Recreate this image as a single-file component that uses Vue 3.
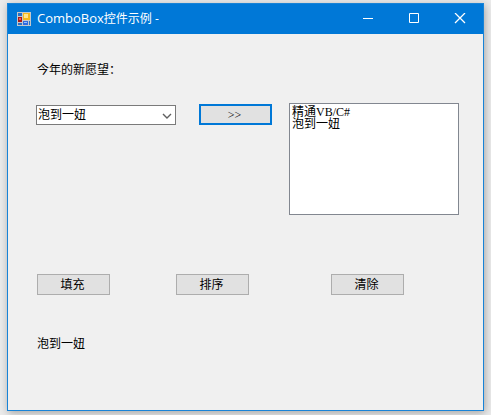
<template>
  <div class="desktop">
    <div class="window">
      <header class="title-bar">
        <svg class="app-icon" width="14" height="14" viewBox="0 0 14 14" shape-rendering="crispEdges">
          <rect width="14" height="14" fill="#c4c8cc" />
          <rect x="1" y="1" width="4" height="3" fill="#2a72c4" />
          <rect x="1" y="5" width="4" height="5" fill="#a81818" />
          <rect x="2" y="6" width="2" height="2" fill="#f06050" />
          <rect x="6" y="1" width="7" height="7" fill="#f4b81c" />
          <rect x="7" y="2" width="4" height="4" fill="#ffe48a" />
          <rect x="6" y="9" width="5" height="4" fill="#2f6ce0" />
          <rect x="7" y="10" width="3" height="1" fill="#9cc0ff" />
          <rect x="1" y="11" width="4" height="2" fill="#2a72c4" />
          <rect x="12" y="9" width="1" height="4" fill="#2a72c4" />
        </svg>
        <h1 class="title"><span class="latin">ComboBox</span>控件示例 -</h1>
        <div class="controls">
          <button type="button" aria-label="最小化">
            <svg width="12" height="12" viewBox="0 0 12 12"><path d="M1 5.5H11" /></svg>
          </button>
          <button type="button" aria-label="最大化">
            <svg width="12" height="12" viewBox="0 0 12 12"><path d="M1.5 0.5H10.5V9.5H1.5Z" /></svg>
          </button>
          <button type="button" aria-label="关闭">
            <svg width="12" height="12" viewBox="0 0 12 12"><path class="cross" d="M1 0L11 10M11 0L1 10" /></svg>
          </button>
        </div>
      </header>

      <main class="form">
        <label class="caption" for="wish">今年的新愿望：</label>
        <div class="row">
          <div class="combo">
            <select id="wish" v-model="wish">
              <option v-for="item in wishes" :key="item" :value="item">{{ item }}</option>
            </select>
            <svg class="arrow" width="10" height="6" viewBox="0 0 10 6"><path d="M1 1L5 5L9 1" /></svg>
          </div>
          <button type="button" class="btn default" @click="add">&gt;&gt;</button>
          <select v-model="picked" class="list" size="8" aria-label="愿望列表">
            <option v-for="item in list" :key="item" :value="item">{{ item }}</option>
          </select>
        </div>
        <div class="actions">
          <button type="button" class="btn" @click="fill">填充</button>
          <button type="button" class="btn" @click="sort">排序</button>
          <button type="button" class="btn" @click="clear">清除</button>
        </div>
        <p class="result">{{ wish }}</p>
      </main>
    </div>
  </div>
</template>

<script setup>
import { ref } from 'vue';

const wishes = ref(['泡到一妞', '精通VB/C#']);
const wish = ref('泡到一妞');
const list = ref(['精通VB/C#', '泡到一妞']);
const picked = ref(null);

const add = () => {
  if (wish.value && !list.value.includes(wish.value)) {
    list.value.push(wish.value);
  }
};

const fill = () => {
  list.value = [...wishes.value];
};

const sort = () => {
  list.value.sort((a, b) => a.localeCompare(b, 'zh'));
};

const clear = () => {
  list.value = [];
};
</script>

<style>
body {
  background: #ebebeb;
}
</style>

<style scoped>
.desktop {
  box-sizing: border-box;
  display: flex;
  min-height: 100vh;
  padding: 3px 7px 4px;
  font-family: "Liberation Serif", "Noto Sans CJK SC", serif;
  font-size: 12px;
  line-height: 14px;
  color: #000;
}
.window {
  flex: 1;
  display: flex;
  flex-direction: column;
  border: 1px solid #1883d7;
  background: #f0f0f0;
  box-shadow: 1px 2px 8px rgba(0, 0, 0, 0.3);
}
.title-bar {
  display: flex;
  align-items: center;
  height: 30px;
  padding-left: 9px;
  background: #0078d7;
  color: #fff;
}
.title {
  flex: 1;
  margin: 0 0 0 6px;
  padding-bottom: 2px;
  font-family: "Open Sans", "Noto Sans CJK SC", sans-serif;
  font-size: 12px;
  font-weight: normal;
}
.latin {
  font-size: 13px;
}
.controls {
  display: flex;
}
.controls button {
  display: flex;
  align-items: center;
  justify-content: center;
  width: 46px;
  height: 30px;
  padding: 0;
  border: none;
  background: none;
}
.controls path {
  fill: none;
  stroke: #fff;
}
.controls .cross {
  stroke-width: 1.3;
}
.form {
  padding: 29px 24px 24px 28px;
}
.caption {
  display: block;
  padding-left: 1px;
}
.row {
  display: flex;
  align-items: flex-start;
  margin-top: 26px;
}
.combo {
  position: relative;
  width: 140px;
  margin: 2px 23px 0 0;
}
.combo select {
  display: block;
  appearance: none;
  box-sizing: border-box;
  width: 100%;
  height: 20px;
  padding: 0 20px 1px 1px;
  border: 1px solid #7a7a7a;
  border-radius: 0;
  background: #fff;
  color: #000;
  font: inherit;
}
.arrow {
  position: absolute;
  top: 8px;
  right: 4px;
  pointer-events: none;
}
.arrow path {
  fill: none;
  stroke: #606060;
  stroke-width: 1.4;
}
.btn {
  box-sizing: border-box;
  width: 73px;
  height: 21px;
  padding: 0 2px 0 0;
  border: 1px solid #adadad;
  background: #e1e1e1;
  color: #000;
  font: inherit;
}
.default {
  margin: 1px 17px 0 0;
  border: 2px solid #0078d7;
}
.list {
  flex: 1;
  box-sizing: border-box;
  min-width: 0;
  height: 112px;
  padding: 1px 2px;
  border: 1px solid #828790;
  border-radius: 0;
  background: #fff;
  color: #000;
  font: inherit;
  overflow: hidden;
}
.list option {
  display: flex;
  align-items: center;
  height: 12px;
  min-height: 0;
  padding: 0;
}
.actions {
  display: grid;
  grid-template-columns: 139px 155px 1fr;
  margin: 59px 0 0 1px;
}
.result {
  margin: 42px 0 0 1px;
}
</style>
